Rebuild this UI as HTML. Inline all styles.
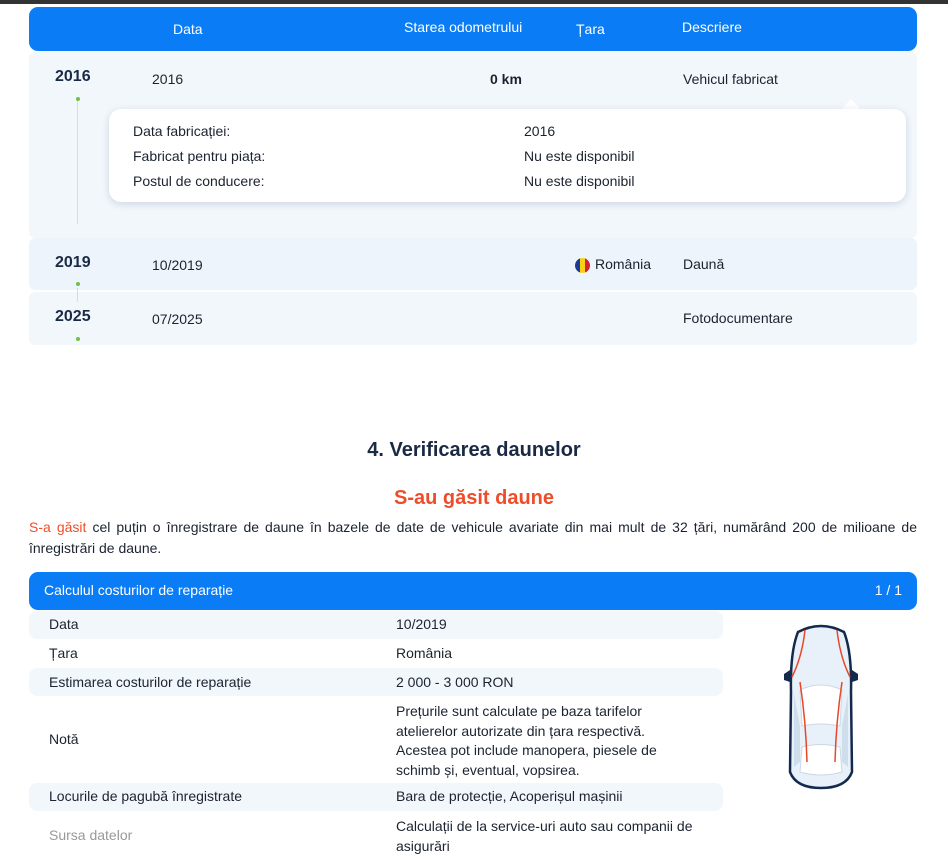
<!DOCTYPE html>
<html><head><meta charset="utf-8"><style>
*{margin:0;padding:0;box-sizing:border-box}
body{width:948px;height:861px;background:#fff;font-family:"Liberation Sans",sans-serif;color:#1b2330;position:relative;overflow:hidden;font-size:14px}
.a{position:absolute;white-space:nowrap}
.hdr{position:absolute;left:29px;top:7px;width:888px;height:44px;background:#0a7cf5;border-radius:9px;color:#fff}
.row{position:absolute;left:29px;width:888px;background:#f2f7fc;border-radius:6px}
.yr{font-weight:bold;font-size:16px;color:#1b2a44}
.dot{position:absolute;left:76px;width:4px;height:4px;border-radius:2px;background:#6cc24a}
.line{position:absolute;left:77px;width:1px;background:#cfe2cf}
.card{position:absolute;left:109px;top:109px;width:797px;height:93px;background:#fff;border-radius:12px;box-shadow:0 2px 8px rgba(0,30,80,.15)}
.tr{position:absolute;left:29px;width:694px;border-radius:8px}
.sh{background:#f2f7fc}
</style></head><body>
<div class="a" style="left:0;top:0;width:948px;height:4px;background:#333"></div>
<div class="hdr">
<span class="a" style="left:144px;top:14px">Data</span>
<span class="a" style="left:375px;top:12px">Starea odometrului</span>
<span class="a" style="left:547px;top:14px">Țara</span>
<span class="a" style="left:653px;top:12px">Descriere</span>
</div>
<div class="row" style="top:52px;height:186px"></div>
<div class="row" style="top:238px;height:52px;background:#edf4fb"></div>
<div class="row" style="top:292px;height:53px"></div>
<div class="line" style="top:100px;height:124px"></div>
<div class="line" style="top:288px;height:14px"></div>
<div class="dot" style="top:97px"></div>
<div class="dot" style="top:282px"></div>
<div class="dot" style="top:337px"></div>
<span class="a yr" style="left:55px;top:68px">2016</span>
<span class="a" style="left:152px;top:71px">2016</span>
<span class="a" style="left:490px;top:71px;font-weight:bold">0 km</span>
<span class="a" style="left:683px;top:71px">Vehicul fabricat</span>
<div class="a" style="left:845px;top:102px;width:12px;height:12px;background:#fff;transform:rotate(45deg)"></div>
<div class="card">
<span class="a" style="left:24px;top:14px">Data fabricației:</span>
<span class="a" style="left:415px;top:14px">2016</span>
<span class="a" style="left:24px;top:39px">Fabricat pentru piața:</span>
<span class="a" style="left:415px;top:39px">Nu este disponibil</span>
<span class="a" style="left:24px;top:64px">Postul de conducere:</span>
<span class="a" style="left:415px;top:64px">Nu este disponibil</span>
</div>
<span class="a yr" style="left:55px;top:254px">2019</span>
<span class="a" style="left:152px;top:257px">10/2019</span>
<span class="a" style="left:575px;top:258px;width:15px;height:15px;border-radius:8px;background:linear-gradient(90deg,#1f3a93 33%,#f7d117 33%,#f7d117 66%,#d6202b 66%)"></span>
<span class="a" style="left:595px;top:256px">România</span>
<span class="a" style="left:683px;top:256px">Daună</span>
<span class="a yr" style="left:55px;top:308px">2025</span>
<span class="a" style="left:152px;top:311px">07/2025</span>
<span class="a" style="left:683px;top:310px">Fotodocumentare</span>

<div class="a" style="left:0;width:948px;top:439px;text-align:center;font-size:20px;font-weight:bold;color:#1b2a44">4. Verificarea daunelor</div>
<div class="a" style="left:0;width:948px;top:487px;text-align:center;font-size:20px;font-weight:bold;color:#ef4d2a">S-au găsit daune</div>
<div class="a" style="left:29px;top:517px;width:888px;white-space:normal;text-align:justify;line-height:21px;font-size:14px"><span style="color:#ef4d2a">S-a găsit</span> cel puțin o înregistrare de daune în bazele de date de vehicule avariate din mai mult de 32 țări, numărând 200 de milioane de înregistrări de daune.</div>

<div class="hdr" style="top:572px;height:38px">
<span class="a" style="left:15px;top:10px">Calculul costurilor de reparație</span>
<span class="a" style="right:15px;top:10px">1 / 1</span>
</div>
<div class="tr sh" style="top:611px;height:28px"></div>
<div class="tr sh" style="top:668px;height:28px"></div>
<div class="tr sh" style="top:783px;height:28px"></div>
<span class="a" style="left:49px;top:616px">Data</span><span class="a" style="left:396px;top:616px">10/2019</span>
<span class="a" style="left:49px;top:645px">Țara</span><span class="a" style="left:396px;top:645px">România</span>
<span class="a" style="left:49px;top:674px">Estimarea costurilor de reparație</span><span class="a" style="left:396px;top:674px">2 000 - 3 000 RON</span>
<span class="a" style="left:49px;top:731px">Notă</span>
<div class="a" style="left:396px;top:702px;width:302px;white-space:normal;line-height:19.5px">Prețurile sunt calculate pe baza tarifelor atelierelor autorizate din țara respectivă. Acestea pot include manopera, piesele de schimb și, eventual, vopsirea.</div>
<span class="a" style="left:49px;top:788px">Locurile de pagubă înregistrate</span><span class="a" style="left:396px;top:788px">Bara de protecție, Acoperișul mașinii</span>
<span class="a" style="left:49px;top:827px;color:#999">Sursa datelor</span>
<div class="a" style="left:396px;top:816px;width:320px;white-space:normal;line-height:20px">Calculații de la service-uri auto sau companii de asigurări</div>

<svg class="a" style="left:780px;top:622px" width="82" height="170" viewBox="0 0 82 170">
<path d="M18 10 Q41 -2 64 10 Q72 30 71 70 L72 150 Q66 166 41 166 Q16 166 10 150 L11 70 Q10 30 18 10Z" fill="#e8f1f9" stroke="#142a4d" stroke-width="2.5"/>
<path d="M20 68 Q41 58 62 68 L60 104 Q41 100 22 104Z" fill="#fff" stroke="#cbd8e6"/>
<path d="M22 125 Q41 120 60 125 L62 150 Q41 156 20 150Z" fill="#fff" stroke="#cbd8e6"/>
<path d="M14 72 L20 104 L20 140 L14 145Z M68 72 L62 104 L62 140 L68 145Z" fill="#cfdeeb"/>
<path d="M25 8 Q22 35 12 55 M57 8 Q60 35 70 55 M20 60 Q26 100 27 140 M62 60 Q56 100 55 140" fill="none" stroke="#e8472a" stroke-width="1.5"/>
<path d="M4 52 L10 48 L10 60 L4 58Z M78 52 L72 48 L72 60 L78 58Z" fill="#142a4d"/>
</svg>
</body></html>
